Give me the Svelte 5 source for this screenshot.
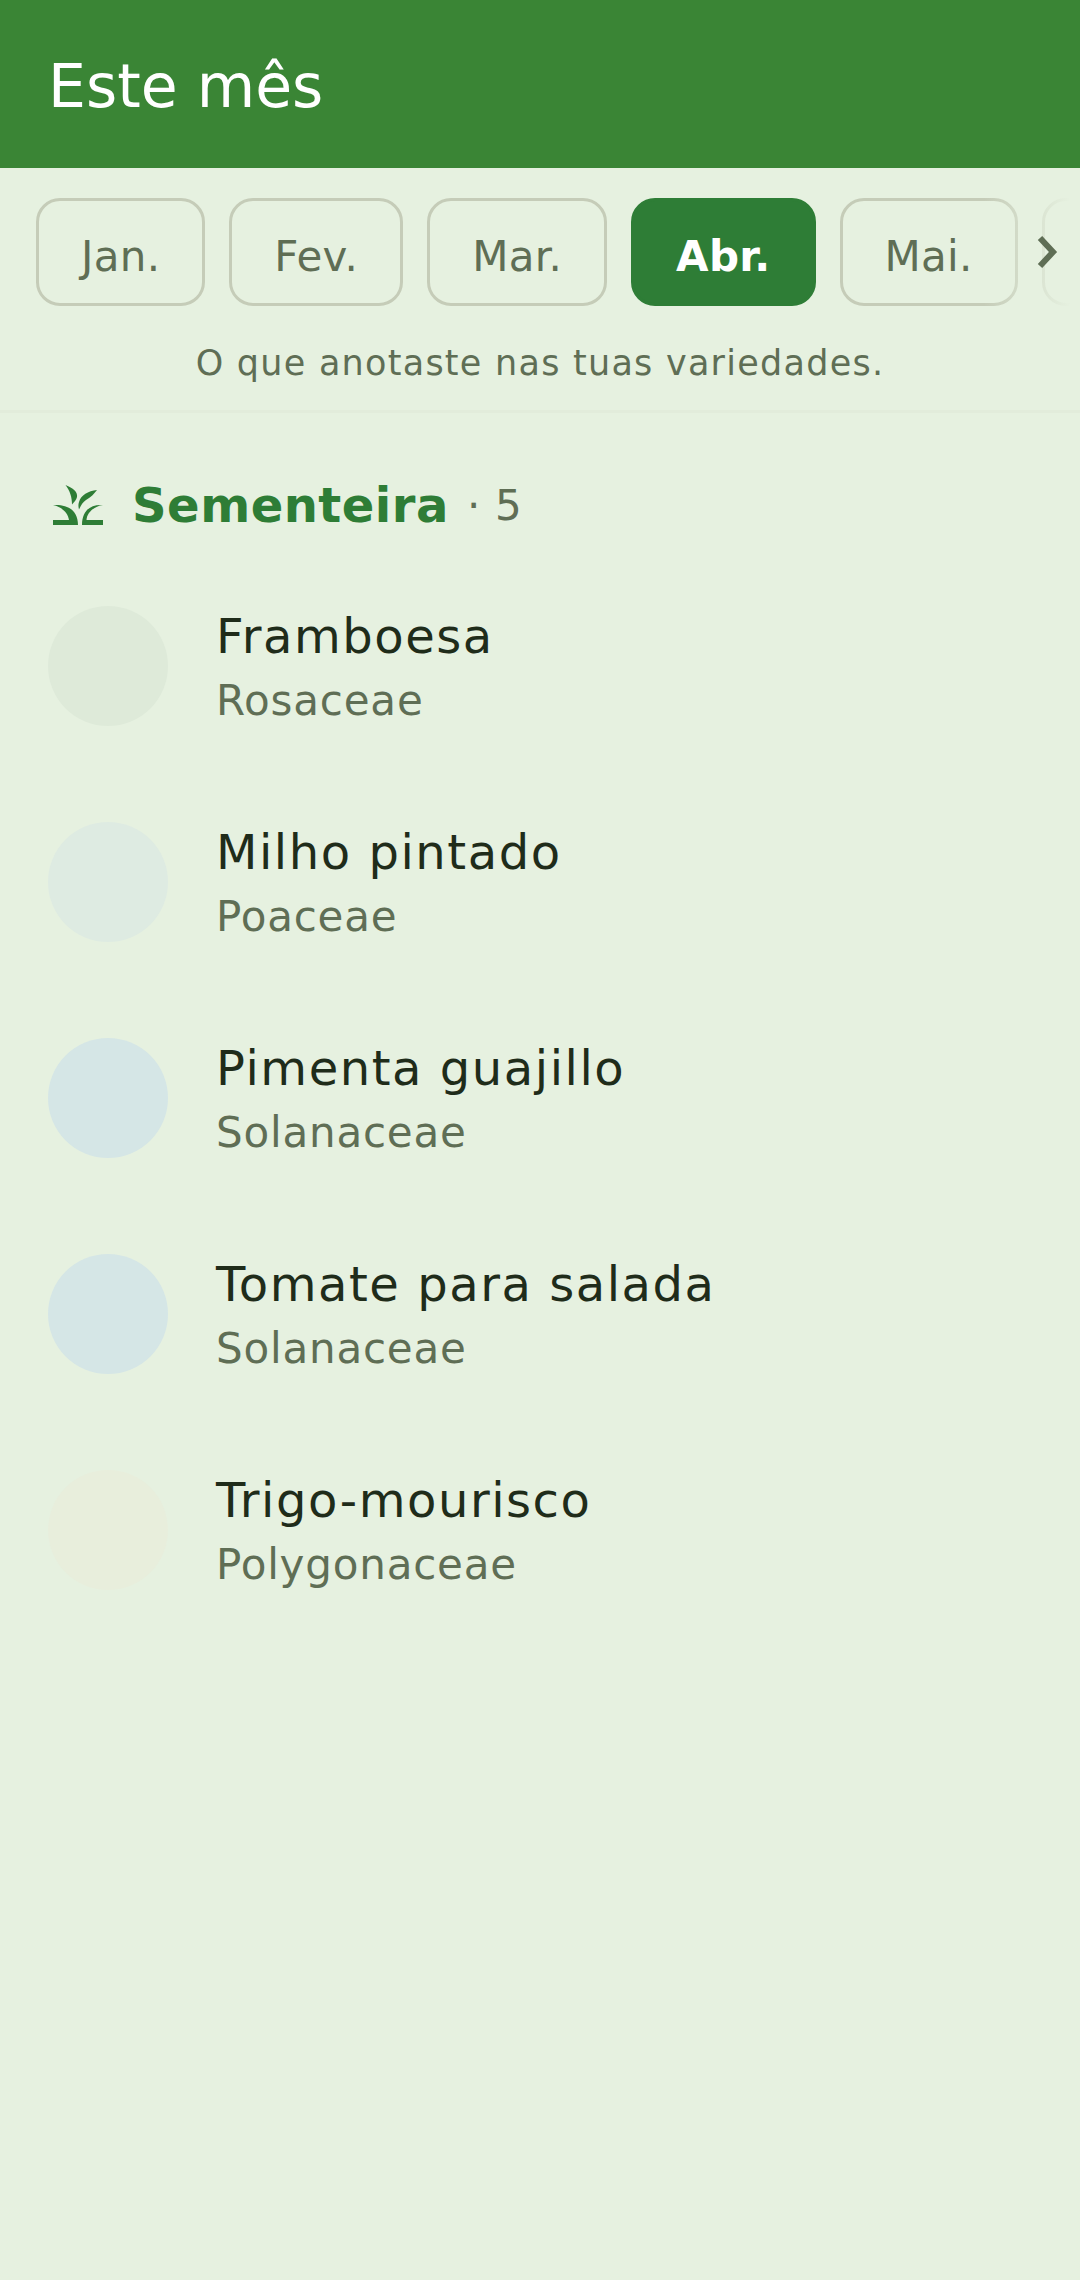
<script lang="ts">
	const months = ['Jan.', 'Fev.', 'Mar.', 'Abr.', 'Mai.', 'Jun.'];
	const activeMonth = 'Abr.';

	const plants = [
		{ name: 'Framboesa', family: 'Rosaceae', tint: '#deead9' },
		{ name: 'Milho pintado', family: 'Poaceae', tint: '#deebe2' },
		{ name: 'Pimenta guajillo', family: 'Solanaceae', tint: '#d5e6e6' },
		{ name: 'Tomate para salada', family: 'Solanaceae', tint: '#d5e6e6' },
		{ name: 'Trigo-mourisco', family: 'Polygonaceae', tint: '#e8eedc' },
	];
</script>

<div class="page">
	<header class="topbar">
		<h1>Este mês</h1>
	</header>

	<section class="filter">
		<div class="months-wrap">
			<div class="months">
				{#each months as month}
					<button class="chip" class:active={month === activeMonth}>{month}</button>
				{/each}
			</div>
			<div class="fade"></div>
			<svg class="chevron" viewBox="0 0 22 36" aria-hidden="true">
				<path d="M3 4 L16 18 L3 32" fill="none" stroke="#5f6e55" stroke-width="6" />
			</svg>
		</div>
		<p class="hint">O que anotaste nas tuas variedades.</p>
	</section>

	<main class="content">
		<div class="section-head">
			<svg class="sprout" viewBox="0 0 50 40" aria-hidden="true">
				<path d="M0 40 V35 H16 C15 28 9 22 0 20 C13 19 25 24 25 40 Z" />
				<path d="M29 40 C29 26 37 19 50 20 C42 21 34 27 33.5 35 H50 V40 Z" />
				<path d="M12.5 0 C20 3 25 7 24 12 C23.5 15 21 17 19 19.5 C19 12 17 6 12.5 0 Z" />
				<path d="M44 5 C35 6 28 10 26 17 C25 20 25.5 22 26 24.5 C28 20 30 17 33 15 C38 12 41 9 44 5 Z" />
			</svg>
			<span class="section-title">Sementeira</span>
			<span class="section-count">· 5</span>
		</div>

		<ul class="list">
			{#each plants as plant}
				<li class="row">
					<div class="avatar" style="background: {plant.tint}"></div>
					<div class="names">
						<div class="name">{plant.name}</div>
						<div class="family">{plant.family}</div>
					</div>
				</li>
			{/each}
		</ul>
	</main>
</div>

<style>
	:global(body) {
		margin: 0;
		background: #e6f1e0;
	}

	.page {
		width: 1080px;
		height: 2280px;
		overflow: hidden;
		background: #e6f1e0;
		font-family: 'DejaVu Sans', sans-serif;
	}

	/* Top bar */
	.topbar {
		height: 168px;
		box-sizing: border-box;
		padding: 4px 0 0 48px;
		display: flex;
		align-items: center;
		background: #3a8535;
	}

	h1 {
		margin: 0;
		font-size: 60px;
		font-weight: 400;
		color: #fff;
	}

	/* Months */
	.filter {
		height: 245px;
		box-sizing: border-box;
		padding-top: 30px;
		border-bottom: 3px solid #e2ecdb;
	}

	.months-wrap {
		position: relative;
		height: 108px;
		overflow: hidden;
	}

	.months {
		display: flex;
		gap: 24px;
		padding-left: 36px;
		width: 1300px;
	}

	.chip {
		height: 108px;
		box-sizing: border-box;
		padding: 8px 42px 0;
		border: 3px solid #c5ccb8;
		border-radius: 24px;
		background: transparent;
		font-family: inherit;
		font-size: 42px;
		letter-spacing: 0.3px;
		color: #5f6e55;
	}

	.chip.active {
		border-color: #2e7d36;
		background: #2e7d36;
		font-weight: 700;
		color: #fff;
	}

	.fade {
		position: absolute;
		top: 0;
		right: 0;
		bottom: 0;
		width: 96px;
		background: linear-gradient(to right, rgba(230, 241, 224, 0), #e6f1e0 90%);
	}

	.chevron {
		position: absolute;
		left: 1037px;
		top: 36px;
		width: 22px;
		height: 36px;
	}

	.hint {
		margin: 37px 0 0;
		text-align: center;
		font-size: 35px;
		letter-spacing: 1.25px;
		color: #5f6e55;
	}

	/* Section */
	.content {
		padding: 62px 48px 0;
	}

	.section-head {
		display: flex;
		align-items: center;
		height: 60px;
	}

	.sprout {
		width: 50px;
		height: 40px;
		margin: 0 29px 0 5px;
		fill: #2e7d36;
	}

	.section-title {
		font-size: 48px;
		font-weight: 700;
		letter-spacing: 0.5px;
		color: #2e7d36;
	}

	.section-count {
		margin-left: 18px;
		font-size: 42px;
		letter-spacing: 0.7px;
		color: #5f6e55;
	}

	.list {
		list-style: none;
		margin: 23px 0 0;
		padding: 0;
	}

	.row {
		display: flex;
		align-items: center;
		height: 216px;
	}

	.avatar {
		width: 120px;
		height: 120px;
		border-radius: 50%;
		margin-right: 48px;
		flex-shrink: 0;
	}

	.names {
		padding-top: 4px;
	}

	.name {
		font-size: 48px;
		letter-spacing: 1.55px;
		color: #1f2c1a;
		line-height: 66px;
	}

	.family {
		font-size: 42px;
		letter-spacing: 0.8px;
		color: #5f6e55;
		line-height: 64px;
	}
</style>
